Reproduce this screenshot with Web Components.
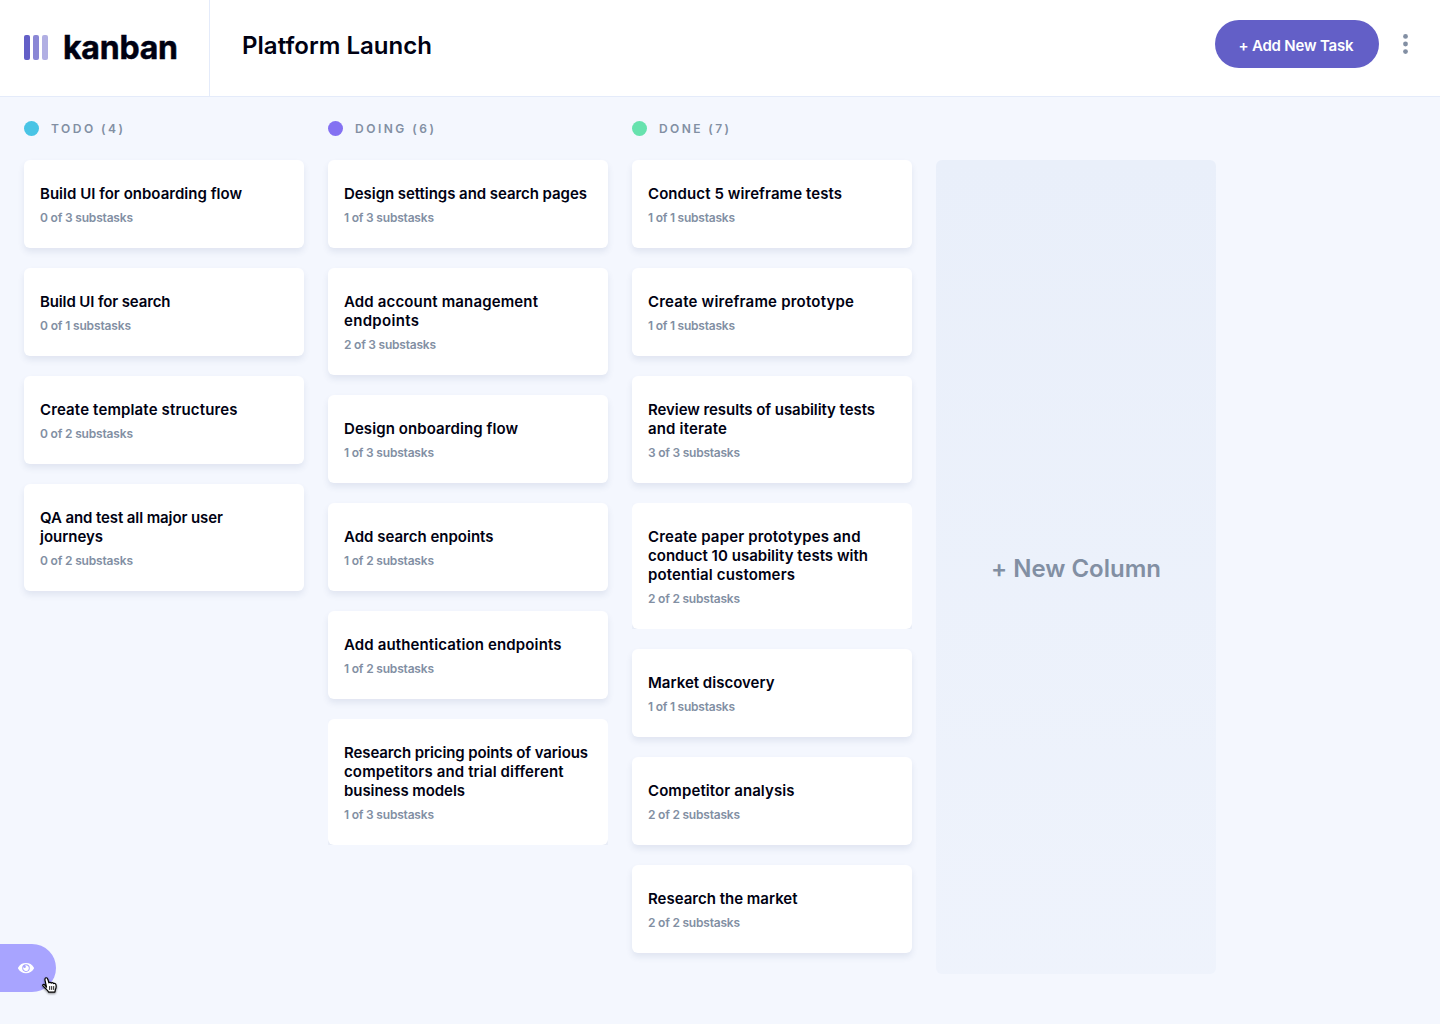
<!DOCTYPE html>
<html lang="en"><head><meta charset="utf-8"><title>Kanban</title>
<style>
html,body{margin:0;height:100%;overflow:hidden}
body{font-family:Inter,"Liberation Sans",sans-serif;background:#f4f7fe;color:#000112}
</style></head><body>
<kanban-app></kanban-app>
<script>
const define=(name,css,html,after)=>customElements.define(name,class extends HTMLElement{
  connectedCallback(){
    if(this.shadowRoot)return;
    this.attachShadow({mode:'open'}).innerHTML=`<style>:host{display:block;box-sizing:border-box}*{box-sizing:border-box}${css}</style>${typeof html==='function'?html(this):html}`;
    if(after)after(this);
  }
});

// A single line of text whose tracking is adjusted to a set measure.
define('text-line',':host{white-space:nowrap}span{display:inline-block}','<span><slot></slot></span>',el=>{
  const w=+el.getAttribute('measure'),s=el.shadowRoot.querySelector('span');
  const n=el.textContent.length;
  if(w){const natural=s.getBoundingClientRect().width;s.style.letterSpacing=((w-natural)/(n-1))+'px';s.style.marginRight=(-(w-natural)/(n-1))+'px'}
});
define('app-logo',':host{display:flex;align-items:center;width:210px;height:96px;padding-left:24px;border-right:1px solid #e4ebfa}svg{display:block;margin:0 15px 1px 0}text-line{font-size:32px;font-weight:700;line-height:40px;-webkit-text-stroke:.5px #000112}',
`<svg width="24" height="25" viewBox="0 0 24 25" fill="#635fc7"><rect width="6" height="25" rx="2"/><rect x="9" width="6" height="25" rx="2" opacity=".75"/><rect x="18" width="6" height="25" rx="2" opacity=".5"/></svg><text-line measure="115">kanban</text-line>`);
define('add-task-button',':host{width:164px;height:48px;border-radius:24px;background:#635fc7;color:#fff;display:flex;align-items:center;justify-content:center;font-size:15px;line-height:20px;font-weight:600;padding:3px 2px 0 0}','<text-line measure="115">+ Add New Task</text-line>');
define('more-menu',':host{width:5px;height:20px}svg{display:block}','<svg width="5" height="20" fill="#828fa3"><circle cx="2.5" cy="2.4" r="2.4"/><circle cx="2.5" cy="10" r="2.4"/><circle cx="2.5" cy="17.6" r="2.4"/></svg>');
define('app-header',':host{display:flex;height:97px;background:#fff;border-bottom:1px solid #e4ebfa}h1{margin:0;padding:30px 0 0 32px;font-size:24px;line-height:32px;font-weight:600;flex:1}.actions{display:flex;gap:24px;padding:20px 32px 0 0}more-menu{margin-top:14px}',
'<app-logo></app-logo><h1><text-line measure="190">Platform Launch</text-line></h1><div class="actions"><add-task-button></add-task-button><more-menu></more-menu></div>');
define('task-card',':host{border-radius:6px}:host([clipped]){overflow:hidden;border-radius:0}.card{padding:24px 16px 23px;border-radius:6px;background:#fff;box-shadow:0 4px 6px rgba(54,78,126,.1)}.title{font-size:15px;line-height:19px;font-weight:600}.sub{font-size:12px;line-height:15px;font-weight:600;color:#828fa3;margin-top:7px}',
el=>{const [lines,sub,sw]=JSON.parse(el.getAttribute('task'));return `<div class="card"><div class="title">${lines.map(([t,w])=>`<text-line measure="${w}">${t}</text-line>`).join('')}</div><div class="sub"><text-line measure="${sw}">${sub} substasks</text-line></div></div>`});
define('board-column',':host{width:280px}header{display:flex;align-items:center;gap:12px;height:15px;margin-bottom:24px;font-size:12px;line-height:15px;font-weight:600;color:#828fa3}i{width:15px;height:15px;border-radius:50%}.cards{display:flex;flex-direction:column;gap:20px}',
el=>`<header><i style="background:${el.getAttribute('color')}"></i><text-line measure="${el.getAttribute('measure')}">${el.getAttribute('name')}</text-line></header><div class="cards"><slot></slot></div>`);
define('new-column',':host{width:280px;height:814px;margin-top:39px;padding-top:3px;border-radius:6px;background:linear-gradient(180deg,#e9effa,rgba(233,239,250,.5));display:flex;align-items:center;justify-content:center;color:#828fa3;font-size:24px;line-height:30px;font-weight:600}','<text-line measure="170">+ New Column</text-line>');
const columns=[
 ['TODO (4)','#49c4e5',72,[
  [[['Build UI for onboarding flow',202]],'0 of 3',93],
  [[['Build UI for search',130.500]],'0 of 1',91],
  [[['Create template structures',197.500]],'0 of 2',93],
  [[['QA and test all major user',183],['journeys',63]],'0 of 2',93]]],
 ['DOING (6)','#8471f2',79,[
  [[['Design settings and search pages',243]],'1 of 3',90],
  [[['Add account management',194],['endpoints',75]],'2 of 3',92],
  [[['Design onboarding flow',174]],'1 of 3',90],
  [[['Add search enpoints',149.500]],'1 of 2',90],
  [[['Add authentication endpoints',217.500]],'1 of 2',90],
  [[['Research pricing points of various',244],['competitors and trial different',219.500],['business models',121]],'1 of 3',90]]],
 ['DONE (7)','#67e2ae',70,[
  [[['Conduct 5 wireframe tests',194]],'1 of 1',87],
  [[['Create wireframe prototype',206]],'1 of 1',87],
  [[['Review results of usability tests',227],['and iterate',79]],'3 of 3',92],
  [[['Create paper prototypes and',212.500],['conduct 10 usability tests with',220],['potential customers',147]],'2 of 2',92],
  [[['Market discovery',126.500]],'1 of 1',87],
  [[['Competitor analysis',146.500]],'2 of 2',92],
  [[['Research the market',149.500]],'2 of 2',92]]]
];
define('task-board',':host{display:flex;gap:24px;padding:24px}',()=>columns.map(([n,c,w,t])=>`<board-column name="${n}" color="${c}" measure="${w}">${t.map(x=>`<task-card ${x[0].length>2?'clipped':''} task='${JSON.stringify(x)}'></task-card>`).join('')}</board-column>`).join('')+'<new-column></new-column>');
define('show-sidebar',':host{position:absolute;left:0;top:944px;width:56px;height:48px;border-radius:0 24px 24px 0;background:#a8a4ff;display:flex;align-items:center;padding-left:18px}','<svg width="16" height="11" viewBox="0 0 16 11"><path fill="#fff" d="M15.815 4.434A9.055 9.055 0 0 0 8 0 9.055 9.055 0 0 0 .185 4.434a1.333 1.333 0 0 0 0 1.354A9.055 9.055 0 0 0 8 10.222a9.055 9.055 0 0 0 7.815-4.434 1.333 1.333 0 0 0 0-1.354ZM8 8.89A3.776 3.776 0 0 1 4.222 5.11 3.776 3.776 0 0 1 8 1.333a3.776 3.776 0 0 1 3.778 3.778A3.776 3.776 0 0 1 8 8.89Zm2.889-3.778a2.889 2.889 0 1 1-5.438-1.36 1.19 1.19 0 1 0 1.19-1.189H6.64a2.889 2.889 0 0 1 4.25 2.549Z"/></svg>');
define('hand-pointer',':host{position:absolute;left:41px;top:976px}svg{display:block;overflow:visible;filter:drop-shadow(0 1px 1px rgba(0,0,0,.45))}','<svg width="18" height="18" viewBox="0 0 18 18"><path fill="#fff" stroke="#000" stroke-width="1.2" stroke-linejoin="round" d="M5.5 11.2 4.2 5.2C3.8 3.6 3.9 2.1 4.9 1.8c1-.3 1.7.7 2.1 2l.9 3.1c.2-.8 2-.9 2.3.2.4-.7 2-.6 2.3.5.8-.6 2.1-.1 2.4 1 .5 2 .3 3.700-.6 5.300l-.4 2.300H7.700c-.7-1.500-1.900-2.500-3.100-3.700L2 9.900c-.8-.9.300-1.900 1.400-1.300z"/><path fill="none" stroke="#000" stroke-width=".9" stroke-linecap="round" d="M8.700 10.500v3M10.700 10.500v3M12.700 10.500v3"/></svg>');
define('kanban-app',':host{position:relative;width:1440px;height:1024px;overflow:hidden}','<app-header></app-header><task-board></task-board><show-sidebar></show-sidebar><hand-pointer></hand-pointer>');
</script></body></html>
